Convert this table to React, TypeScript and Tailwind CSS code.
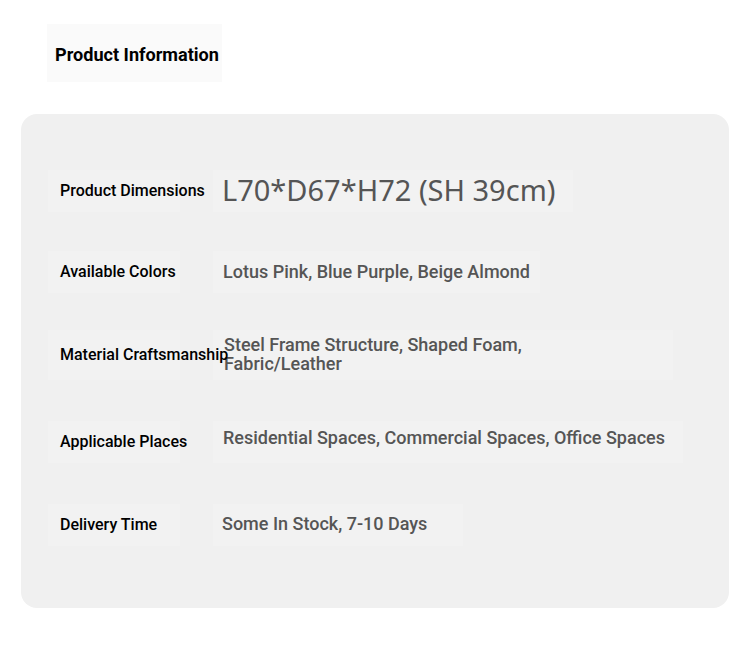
export default function App() {
  const rows = [
    { label: "Product Dimensions", value: "L70*D67*H72 (SH 39cm)", big: true, h: "h-[42px]", mt: "mt-0", vw: "w-[360px]", vx: "mb-[2px] -ml-[1px]" },
    { label: "Available Colors", value: "Lotus Pink, Blue Purple, Beige Almond", h: "h-[42px]", mt: "mt-[39px]", vw: "w-[327px]", vx: "mb-[2px]" },
    { label: "Material Craftsmanship", value: "Steel Frame Structure, Shaped Foam, Fabric/Leather", h: "h-[50px]", mt: "mt-[37px]", vw: "w-[460px]", wrap: true, vx: "pl-[1px] mb-[3px]" },
    { label: "Applicable Places", value: "Residential Spaces, Commercial Spaces, Office Spaces", h: "h-[42px]", mt: "mt-[41px]", vw: "w-[470px]", vx: "mb-[10px]" },
    { label: "Delivery Time", value: "Some In Stock, 7-10 Days", h: "h-[42px]", mt: "mt-[41px]", vw: "w-[250px]", vx: "-ml-[1px] mb-[4px]" },
  ];
  return (
    <div className="w-[750px] h-[657px] bg-white" style={{ fontFamily: "Roboto, 'Liberation Sans', sans-serif" }}>
      <div className="pt-[24px] pl-[47px]">
        <div className="w-[175px] h-[58px] bg-[#fafafa] flex items-center pl-[8px] pt-[4px]">
          <span className="text-[18.1px] font-bold text-black">Product Information</span>
        </div>
      </div>
      <div className="mt-[32px] ml-[21px] w-[708px] h-[494px] rounded-[16px] bg-[#f0f0f0] pt-[56px] pl-[27px]">
        {rows.map((r) => (
          <div key={r.label} className={`flex items-center ${r.h} ${r.mt}`}>
            <div className="relative z-10 w-[132px] h-full bg-[#f2f2f2] flex items-center pl-[12px] whitespace-nowrap">
              <span className="text-[16px] font-medium text-black">{r.label}</span>
            </div>
            <div className={`ml-[33px] h-full ${r.vw} bg-[#f2f2f2] flex items-center pl-[10px]`}>
              {r.big ? (
                <span className={`text-[29px] text-[#555555] ${r.vx}`} style={{ fontFamily: "'Noto Sans', sans-serif" }}>{r.value}</span>
              ) : r.wrap ? (
                <span className={`text-[18px] font-medium text-[#555555] leading-[19px] w-[310px] ${r.vx}`}>{r.value}</span>
              ) : (
                <span className={`text-[18px] font-medium text-[#555555] ${r.vx}`}>{r.value}</span>
              )}
            </div>
          </div>
        ))}
      </div>
    </div>
  );
}
